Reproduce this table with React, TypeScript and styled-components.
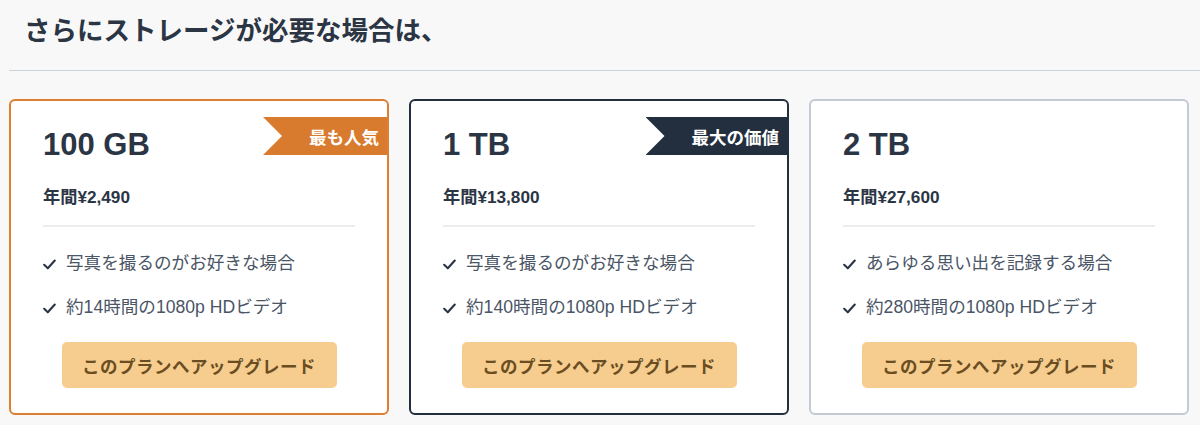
import React from "react";
import styled, { createGlobalStyle } from "styled-components";

const Global = createGlobalStyle`
  html, body { margin: 0; padding: 0; background: #f8f8f8; }
  body { font-family: "Liberation Sans", "Noto Sans CJK JP", sans-serif; color: #2b3544; }
`;

const Page = styled.div`
  width: 1200px;
  height: 425px;
  overflow: hidden;
  background: #f8f8f8;
`;

const Header = styled.div`
  margin-left: 9px;
  height: 71px;
  padding-left: 15px;
  border-bottom: 1px solid #cbd2da;
  box-sizing: border-box;
  display: flex;
  align-items: flex-start;
`;

const Heading = styled.h2`
  margin: 0;
  padding-top: 12px;
  font-size: 26.5px;
  line-height: 38px;
  font-weight: 700;
  color: #2b3544;
`;

const Row = styled.div`
  display: flex;
  gap: 20px;
  padding: 28px 9px 0;
`;

const Card = styled.div<{ $border: string }>`
  position: relative;
  width: 380px;
  height: 316px;
  box-sizing: border-box;
  background: #fff;
  border: 2px solid ${(p) => p.$border};
  border-radius: 6px;
  padding: 26px 32px 25px;
  display: flex;
  flex-direction: column;
`;

const Badge = styled.div<{ $bg: string }>`
  position: absolute;
  top: 16px;
  right: 0;
  height: 38px;
  padding: 0 8px 0 46px;
  display: flex;
  align-items: center;
  background: ${(p) => p.$bg};
  color: #fff;
  font-size: 17.5px;
  font-weight: 700;
  clip-path: polygon(0 0, 100% 0, 100% 100%, 0 100%, 19px 50%);
`;

const Size = styled.div`
  font-size: 31px;
  line-height: 36px;
  font-weight: 700;
  color: #2b3544;
`;

const Price = styled.div`
  margin-top: 22px;
  font-size: 17.2px;
  line-height: 24px;
  font-weight: 700;
  color: #2b3544;
`;

const Rule = styled.div`
  margin-top: 16px;
  height: 2px;
  background: #ececee;
`;

const List = styled.ul`
  list-style: none;
  margin: 24px 0 0;
  padding: 0;
  display: flex;
  flex-direction: column;
  gap: 20px;
`;

const Item = styled.li`
  display: flex;
  align-items: center;
  gap: 10px;
  font-size: 17.6px;
  line-height: 24px;
  color: #4a5566;
`;

const Check = styled.svg`
  width: 13px;
  height: 11px;
  flex: none;
  margin-top: 2px;
`;

const Button = styled.button`
  align-self: center;
  margin-top: 23px;
  width: 275px;
  height: 46px;
  border: none;
  border-radius: 5px;
  background: #f7cd8f;
  color: #6a4e22;
  font-family: inherit;
  font-size: 17.5px;
  font-weight: 700;
  letter-spacing: 0.5px;
  cursor: pointer;
`;

type Plan = {
  size: string;
  price: string;
  border: string;
  badge?: { text: string; bg: string };
  features: string[];
};

const plans: Plan[] = [
  {
    size: "100 GB",
    price: "年間¥2,490",
    border: "#dc7f31",
    badge: { text: "最も人気", bg: "#d97b2e" },
    features: ["写真を撮るのがお好きな場合", "約14時間の1080p HDビデオ"],
  },
  {
    size: "1 TB",
    price: "年間¥13,800",
    border: "#232f3e",
    badge: { text: "最大の価値", bg: "#232f3e" },
    features: ["写真を撮るのがお好きな場合", "約140時間の1080p HDビデオ"],
  },
  {
    size: "2 TB",
    price: "年間¥27,600",
    border: "#c3cad4",
    features: ["あらゆる思い出を記録する場合", "約280時間の1080p HDビデオ"],
  },
];

const CheckIcon = () => (
  <Check viewBox="0 0 13 11">
    <path d="M1.2 5.8 L4.8 9.3 L11.8 1.5" fill="none" stroke="#2b3544" strokeWidth="2.1" strokeLinecap="round" strokeLinejoin="round" />
  </Check>
);

export default function App() {
  return (
    <Page>
      <Global />
      <Header>
        <Heading>さらにストレージが必要な場合は、</Heading>
      </Header>
      <Row>
        {plans.map((p) => (
          <Card key={p.size} $border={p.border}>
            {p.badge && <Badge $bg={p.badge.bg}>{p.badge.text}</Badge>}
            <Size>{p.size}</Size>
            <Price>{p.price}</Price>
            <Rule />
            <List>
              {p.features.map((f) => (
                <Item key={f}>
                  <CheckIcon />
                  {f}
                </Item>
              ))}
            </List>
            <Button>このプランへアップグレード</Button>
          </Card>
        ))}
      </Row>
    </Page>
  );
}
